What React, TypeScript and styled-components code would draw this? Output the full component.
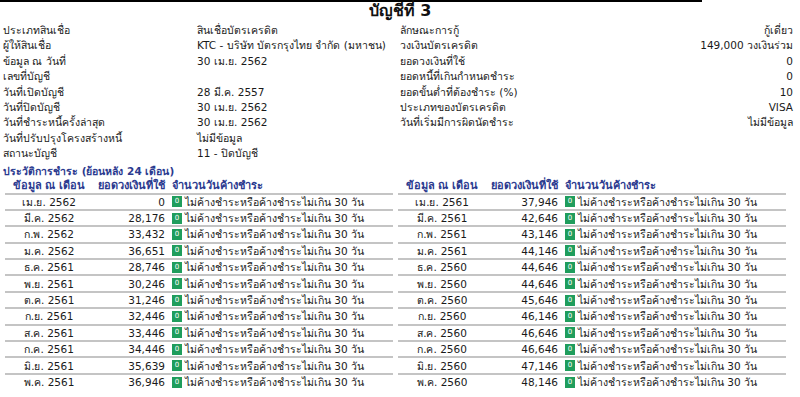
import React from "react";
import styled, { createGlobalStyle } from "styled-components";

const Global = createGlobalStyle`
  html, body { margin: 0; padding: 0; background: #fff; }
  body { font-family: Tahoma, "DejaVu Sans", "Noto Sans", sans-serif; color: #1a1a1a; }
`;

const Page = styled.div`
  width: 800px;
  height: 397px;
  overflow: hidden;
`;

const TopRule = styled.div`
  width: 702px;
  border-top: 2px solid #000;
`;

const Title = styled.h1`
  margin: 0;
  height: 17px;
  text-align: center;
  font-size: 16px;
  font-weight: bold;
  line-height: 17px;
  color: #111;
`;

const Info = styled.div`
  display: grid;
  grid-template-columns: 397px 393px;
  padding-left: 3px;
  margin-top: 4px;
`;

const InfoCol = styled.div<{ $labelW: number }>`
  display: grid;
  grid-template-columns: ${(p) => p.$labelW}px 1fr;
  grid-auto-rows: 15.4px;
  align-items: center;
  font-size: 10.5px;
  line-height: 15.4px;
`;

const Value = styled.span<{ $right?: boolean }>`
  text-align: ${(p) => (p.$right ? "right" : "left")};
  white-space: nowrap;
`;

const Label = styled.span`
  white-space: nowrap;
`;

const HistoryTitle = styled.div`
  margin-top: 2px;
  padding-left: 3px;
  font-size: 10.5px;
  font-weight: bold;
  color: #2b3a8f;
  height: 15px;
  line-height: 15px;
`;

const Tables = styled.div`
  display: grid;
  grid-template-columns: 388px 388px;
  column-gap: 5px;
  padding-left: 5px;
`;

const Table = styled.div`
  display: flex;
  flex-direction: column;
`;

const Row = styled.div<{ $head?: boolean }>`
  display: grid;
  grid-template-columns: 88px 72px 1fr;
  align-items: center;
  height: ${(p) => (p.$head ? 14 : 14.4)}px;
  line-height: 14px;
  border-top: ${(p) => (p.$head ? "none" : "2px solid #c4c4c4")};
  font-size: ${(p) => (p.$head ? 11 : 10.5)}px;
  color: ${(p) => (p.$head ? "#2b3a8f" : "#1a1a1a")};
  font-weight: ${(p) => (p.$head ? "bold" : "normal")};
  white-space: nowrap;
`;

const Month = styled.span`
  text-align: center;
`;

const Amount = styled.span`
  text-align: right;
`;

const Status = styled.span`
  display: flex;
  align-items: center;
  padding-left: 7px;
  gap: 3px;
`;

const Badge = styled.span`
  display: inline-flex;
  align-items: center;
  justify-content: center;
  width: 10px;
  height: 11px;
  background: #1f9d5c;
  color: #fff;
  font-size: 7px;
  line-height: 11px;
`;

const HeadStatus = styled.span`
  padding-left: 7px;
`;

const leftInfo: [string, string][] = [
  ["ประเภทสินเชื่อ", "สินเชื่อบัตรเครดิต"],
  ["ผู้ให้สินเชื่อ", "KTC - บริษัท บัตรกรุงไทย จำกัด (มหาชน)"],
  ["ข้อมูล ณ วันที่", "30 เม.ย. 2562"],
  ["เลขที่บัญชี", ""],
  ["วันที่เปิดบัญชี", "28 มี.ค. 2557"],
  ["วันที่ปิดบัญชี", "30 เม.ย. 2562"],
  ["วันที่ชำระหนี้ครั้งล่าสุด", "30 เม.ย. 2562"],
  ["วันที่ปรับปรุงโครงสร้างหนี้", "ไม่มีข้อมูล"],
  ["สถานะบัญชี", "11 - ปิดบัญชี"],
];

const rightInfo: [string, string][] = [
  ["ลักษณะการกู้", "กู้เดี่ยว"],
  ["วงเงินบัตรเครดิต", "149,000 วงเงินร่วม"],
  ["ยอดวงเงินที่ใช้", "0"],
  ["ยอดหนี้ที่เกินกำหนดชำระ", "0"],
  ["ยอดขั้นต่ำที่ต้องชำระ (%)", "10"],
  ["ประเภทของบัตรเครดิต", "VISA"],
  ["วันที่เริ่มมีการผิดนัดชำระ", "ไม่มีข้อมูล"],
];

const leftRows: [string, string][] = [
  ["เม.ย. 2562", "0"],
  ["มี.ค. 2562", "28,176"],
  ["ก.พ. 2562", "33,432"],
  ["ม.ค. 2562", "36,651"],
  ["ธ.ค. 2561", "28,746"],
  ["พ.ย. 2561", "30,246"],
  ["ต.ค. 2561", "31,246"],
  ["ก.ย. 2561", "32,446"],
  ["ส.ค. 2561", "33,446"],
  ["ก.ค. 2561", "34,446"],
  ["มิ.ย. 2561", "35,639"],
  ["พ.ค. 2561", "36,946"],
];

const rightRows: [string, string][] = [
  ["เม.ย. 2561", "37,946"],
  ["มี.ค. 2561", "42,646"],
  ["ก.พ. 2561", "43,146"],
  ["ม.ค. 2561", "44,146"],
  ["ธ.ค. 2560", "44,646"],
  ["พ.ย. 2560", "44,646"],
  ["ต.ค. 2560", "45,646"],
  ["ก.ย. 2560", "46,146"],
  ["ส.ค. 2560", "46,646"],
  ["ก.ค. 2560", "46,646"],
  ["มิ.ย. 2560", "47,146"],
  ["พ.ค. 2560", "48,146"],
];

const STATUS = "ไม่ค้างชำระหรือค้างชำระไม่เกิน 30 วัน";

function HistoryTable({ rows }: { rows: [string, string][] }) {
  return (
    <Table>
      <Row $head>
        <Month>ข้อมูล ณ เดือน</Month>
        <Amount>ยอดวงเงินที่ใช้</Amount>
        <HeadStatus>จำนวนวันค้างชำระ</HeadStatus>
      </Row>
      {rows.map(([m, a]) => (
        <Row key={m}>
          <Month>{m}</Month>
          <Amount>{a}</Amount>
          <Status>
            <Badge>0</Badge>
            {STATUS}
          </Status>
        </Row>
      ))}
    </Table>
  );
}

export default function App() {
  return (
    <Page>
      <Global />
      <TopRule />
      <Title>บัญชีที่ 3</Title>
      <Info>
        <InfoCol $labelW={194}>
          {leftInfo.map(([l, v]) => (
            <React.Fragment key={l}>
              <Label>{l}</Label>
              <Value>{v}</Value>
            </React.Fragment>
          ))}
        </InfoCol>
        <InfoCol $labelW={200}>
          {rightInfo.map(([l, v]) => (
            <React.Fragment key={l}>
              <Label>{l}</Label>
              <Value $right>{v}</Value>
            </React.Fragment>
          ))}
        </InfoCol>
      </Info>
      <HistoryTitle>ประวัติการชำระ (ย้อนหลัง 24 เดือน)</HistoryTitle>
      <Tables>
        <HistoryTable rows={leftRows} />
        <HistoryTable rows={rightRows} />
      </Tables>
    </Page>
  );
}
